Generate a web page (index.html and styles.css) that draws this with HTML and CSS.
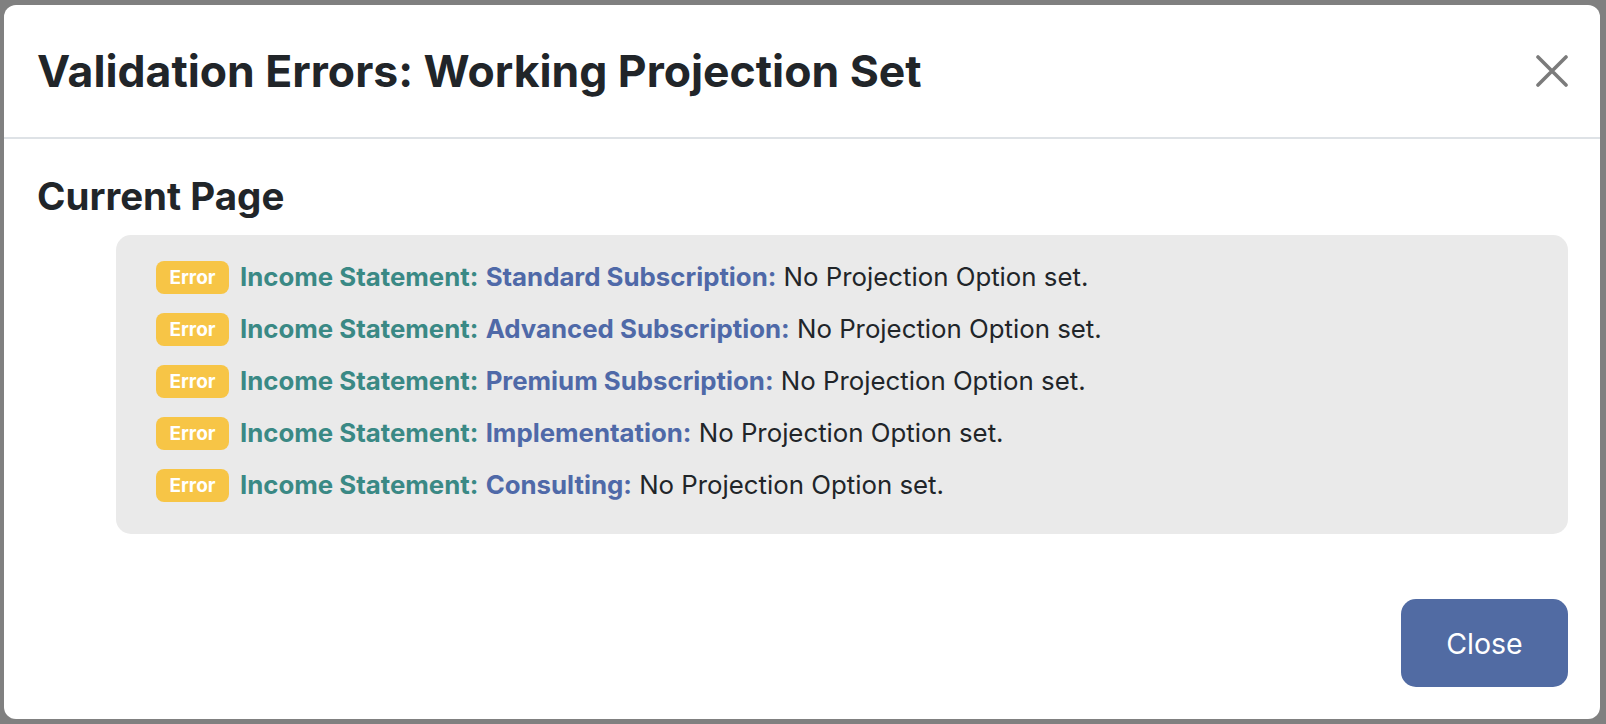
FILE: index.html
```html
<!DOCTYPE html>
<html lang="en">
<head>
<meta charset="utf-8">
<title>Validation Errors</title>
<link rel="stylesheet" href="styles.css">
</head>
<body>
<div class="backdrop">
  <div class="modal">
    <div class="modal-header">
      <h1 class="modal-title">Validation Errors: Working Projection Set</h1>
      <button class="close-x" aria-label="Close">
        <svg width="32" height="32" viewBox="0 0 32 32"><path d="M2 2 L30 30 M30 2 L2 30" stroke="#7b7b7b" stroke-width="3.6" stroke-linecap="round" fill="none"/></svg>
      </button>
    </div>
    <div class="modal-body">
      <h2 class="section-title">Current Page</h2>
      <div class="error-box">
        <div class="error-row"><span class="badge">Error</span><span class="msg"><span class="sheet">Income Statement:</span> <span class="item">Standard Subscription:</span> No Projection Option set.</span></div>
        <div class="error-row"><span class="badge">Error</span><span class="msg"><span class="sheet">Income Statement:</span> <span class="item">Advanced Subscription:</span> No Projection Option set.</span></div>
        <div class="error-row"><span class="badge">Error</span><span class="msg"><span class="sheet">Income Statement:</span> <span class="item">Premium Subscription:</span> No Projection Option set.</span></div>
        <div class="error-row"><span class="badge">Error</span><span class="msg"><span class="sheet">Income Statement:</span> <span class="item">Implementation:</span> No Projection Option set.</span></div>
        <div class="error-row"><span class="badge">Error</span><span class="msg"><span class="sheet">Income Statement:</span> <span class="item">Consulting:</span> No Projection Option set.</span></div>
      </div>
    </div>
    <div class="modal-footer">
      <button class="btn-close">Close</button>
    </div>
  </div>
</div>
</body>
</html>
```
FILE: styles.css
```css
html, body {
  margin: 0;
  padding: 0;
}
body {
  background: #808080;
  font-family: "Inter", "Lato", sans-serif;
  color: #212529;
  width: 1606px;
  height: 724px;
  overflow: hidden;
}
.backdrop {
  padding: 5px 6px 5px 4px;
}
.modal {
  width: 1596px;
  height: 714px;
  background: #ffffff;
  border-radius: 12px;
  display: flex;
  flex-direction: column;
  box-sizing: border-box;
}
.modal-header {
  height: 132px;
  padding: 0 32px 0 33px;
  border-bottom: 2px solid #dee2e6;
  display: flex;
  align-items: center;
  justify-content: space-between;
}
.modal-title {
  margin: 0;
  font-size: 44.5px;
  font-weight: 700;
  line-height: 54px;
  color: #212529;
}
.close-x {
  border: 0;
  background: none;
  padding: 0;
  width: 32px;
  height: 32px;
  display: block;
}
.close-x svg { display: block; }
.modal-body {
  padding: 34px 32px 0 33px;
}
.section-title {
  margin: 0 0 16px 0;
  font-size: 38.5px;
  font-weight: 700;
  line-height: 46px;
  color: #212529;
}
.error-box {
  margin-left: 79px;
  background: #eaeaea;
  border-radius: 15px;
  padding: 16px 0 23px 40px;
}
.error-row {
  height: 52px;
  display: flex;
  align-items: center;
}
.badge {
  width: 73px;
  height: 33px;
  border-radius: 8px;
  background: #f7c546;
  color: #ffffff;
  font-size: 19px;
  font-weight: 700;
  display: flex;
  align-items: center;
  justify-content: center;
  margin-right: 11px;
  flex: none;
}
.msg {
  font-size: 25.8px;
  color: #212529;
  white-space: nowrap;
  line-height: 32px;
  margin-top: -1px;
}
.sheet {
  color: #3a8985;
  font-weight: 700;
}
.item {
  color: #4f69a8;
  font-weight: 700;
}
.modal-footer {
  margin-top: auto;
  padding: 0 32px 32px 0;
  display: flex;
  justify-content: flex-end;
}
.btn-close {
  width: 167px;
  height: 88px;
  border: 0;
  border-radius: 15px;
  background: #516ba3;
  color: #ffffff;
  font-family: "Inter", "Lato", sans-serif;
  font-size: 28.5px;
  font-weight: 400;
  padding: 0;
}
```
